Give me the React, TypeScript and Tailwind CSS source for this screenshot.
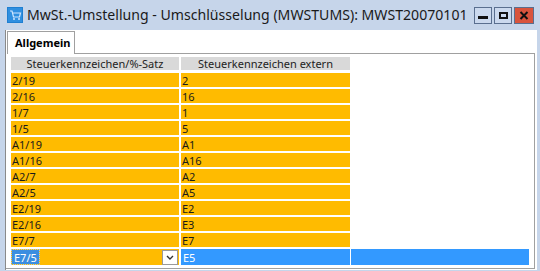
const rows: [string, string][] = [
  ['2/19', '2'],
  ['2/16', '16'],
  ['1/7', '1'],
  ['1/5', '5'],
  ['A1/19', 'A1'],
  ['A1/16', 'A16'],
  ['A2/7', 'A2'],
  ['A2/5', 'A5'],
  ['E2/19', 'E2'],
  ['E2/16', 'E3'],
  ['E7/7', 'E7'],
];

function AppIcon() {
  return (
    <svg className="shrink-0" width="16" height="16" viewBox="0 0 16 16">
      <rect x="0" y="0" width="16" height="16" fill="#1f7fd1" />
      <rect x="1" y="1" width="14" height="14" fill="#2f8fe0" />
      <path d="M3 4h2l1.5 6h6l1-4H6" fill="none" stroke="#cfe6ff" strokeWidth="1.2" />
      <circle cx="7" cy="12" r="1" fill="#cfe6ff" />
      <circle cx="12" cy="12" r="1" fill="#cfe6ff" />
    </svg>
  );
}

function WinButton({ kind }: { kind: 'min' | 'max' | 'close' }) {
  const base = 'flex h-[17px] items-center justify-center border border-[#5a6f8f]';
  if (kind === 'close') {
    return (
      <div className={`${base} w-[20px] bg-[#d9543d]`}>
        <svg width="10" height="9" viewBox="0 0 10 9">
          <path d="M1.5 1l7 7M8.5 1l-7 7" stroke="#111" strokeWidth="2" />
        </svg>
      </div>
    );
  }
  return (
    <div className={`${base} w-[18px] bg-[#cbd9ee]`}>
      {kind === 'min' ? (
        <div className="mt-[5px] h-[3px] w-[10px] bg-[#111]" />
      ) : (
        <div className="h-[7px] w-[9px] border-2 border-[#111]" />
      )}
    </div>
  );
}

export default function App() {
  const cell = 'h-[14px] flex items-center px-[1px] text-[11px] leading-none text-[#1a1a1a]';
  return (
    <div
      className="flex h-[271px] w-[540px] flex-col overflow-hidden bg-[#c6d5ea]"
      style={{ fontFamily: '"Noto Sans", "Open Sans", sans-serif' }}
    >
      {/* Title bar */}
      <div className="flex h-[30px] items-center pl-[7px] pr-[6px]">
        <AppIcon />
        <span className="ml-[4px] min-w-0 flex-1 overflow-hidden whitespace-nowrap text-[14.1px] text-[#1a1a1a]">
          MwSt.-Umstellung - Umschlüsselung (MWSTUMS): MWST20070101
        </span>
        <div className="flex shrink-0 gap-[2px]">
          <WinButton kind="min" />
          <WinButton kind="max" />
          <WinButton kind="close" />
        </div>
      </div>

      {/* Client area */}
      <div className="mb-[1px] ml-[5px] mr-[3px] flex flex-1 flex-col border-l border-[#8a8a8a] bg-white">
        {/* Tab strip */}
        <div className="flex h-[24px] items-end">
          <div className="ml-[1px] flex h-[23px] w-[68px] items-center border-l border-r border-t border-[#a0a0a0] pl-[7px] text-[11px] font-bold text-black">
            Allgemein
          </div>
          <div className="mr-[2px] flex-1 border-b border-[#a0a0a0]" />
        </div>

        {/* Panel */}
        <div className="mb-[1px] mr-[2px] flex-1 border-b border-r border-[#a0a0a0] pl-[5px] pt-[3px]">
          <div className="grid grid-cols-[168px_169px] gap-x-[2px]">
            <div className="flex h-[13px] items-center justify-center bg-[#d9d9d9] text-[11px] leading-none text-[#222]">
              Steuerkennzeichen/%-Satz
            </div>
            <div className="flex h-[13px] items-center justify-center bg-[#d9d9d9] text-[11px] leading-none text-[#222]">
              Steuerkennzeichen extern
            </div>
          </div>
          <div className="mt-[3px] flex flex-col gap-[2px]">
            {rows.map(([a, b]) => (
              <div key={a} className="grid grid-cols-[168px_169px] gap-x-[2px]">
                <div className={`${cell} bg-[#ffbb00]`}>{a}</div>
                <div className={`${cell} bg-[#ffbb00]`}>{b}</div>
              </div>
            ))}
            {/* Edited row */}
            <div className="flex">
              <div className="flex h-[16px] w-[168px] items-center bg-[#ffbb00] pl-[1px]">
                <span className="flex h-[14px] items-center bg-[#3b8ee0] px-[2px] text-[11px] leading-none text-white outline-1 outline-dotted outline-[#9cc6f0]">
                  E7/5
                </span>
                <div className="flex-1" />
                <div className="mr-[1px] flex h-[15px] w-[16px] items-center justify-center border border-[#9a9a9a] bg-white">
                  <svg width="8" height="5" viewBox="0 0 8 5">
                    <path d="M1 1l3 3 3-3" fill="none" stroke="#333" strokeWidth="1.4" />
                  </svg>
                </div>
              </div>
              <div className="ml-[2px] flex h-[16px] w-[169px] items-center bg-[#3399ff] px-[2px] text-[11px] leading-none text-white">
                E5
              </div>
              <div className="ml-[1px] h-[16px] w-[178px] bg-[#3399ff]" />
            </div>
          </div>
        </div>
      </div>
    </div>
  );
}
